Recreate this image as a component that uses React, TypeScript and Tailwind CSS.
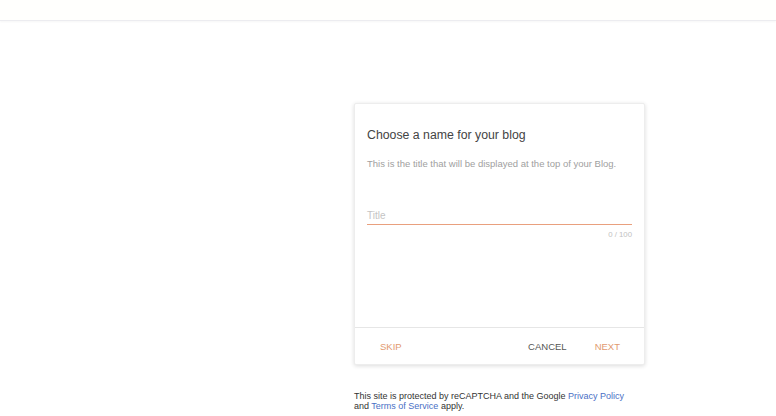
export default function App() {
  return (
    <div className="w-[776px] h-[416px] bg-white overflow-hidden" style={{ fontFamily: "Arial, 'Liberation Sans', sans-serif" }}>
      {/* Top bar */}
      <div className="h-[21px] bg-[#fffffd] border-b border-[#ececf0] shadow-[0_1px_2px_rgba(0,0,0,0.04)]"></div>

      <div className="pl-[354px] pt-[82px]">
        {/* Dialog card */}
        <div className="w-[291px] h-[262px] bg-white rounded-[2px] border border-[#ededed] shadow-[0_1px_4px_rgba(0,0,0,0.14)] flex flex-col">
          <div className="flex-1 px-[12px] pt-[24px]">
            <h2 className="text-[12.3px] leading-[15px] text-[#444444]">Choose a name for your blog</h2>
            <p className="mt-[15px] text-[9.5px] leading-[11px] text-[#a0a0a0]">
              This is the title that will be displayed at the top of your Blog.
            </p>
            <div className="mt-[40px] pb-[2px] text-[10px] leading-[13px] text-[#c4c4c4]">Title</div>
            <div className="h-px bg-[#e9a07e]"></div>
            <div className="mt-[5px] text-right text-[7.8px] leading-[10px] text-[#c2c2c2]">0 / 100</div>
          </div>
          <div className="h-[37px] border-t border-[#e6e6e6] flex items-center px-[25px] pt-[2px] text-[9.5px]">
            <span className="text-[#e29a6f]">SKIP</span>
            <span className="ml-auto text-[#555555]">CANCEL</span>
            <span className="ml-[28px] mr-[-1px] text-[#e29a6f]">NEXT</span>
          </div>
        </div>

        {/* Footer note */}
        <p className="mt-[26px] text-[9px] leading-[10px] text-[#333333]">
          This site is protected by reCAPTCHA and the Google <span className="text-[#4a6fc5]">Privacy Policy</span>
          <br />
          and <span className="text-[#4a6fc5]">Terms of Service</span> apply.
        </p>
      </div>
    </div>
  );
}
